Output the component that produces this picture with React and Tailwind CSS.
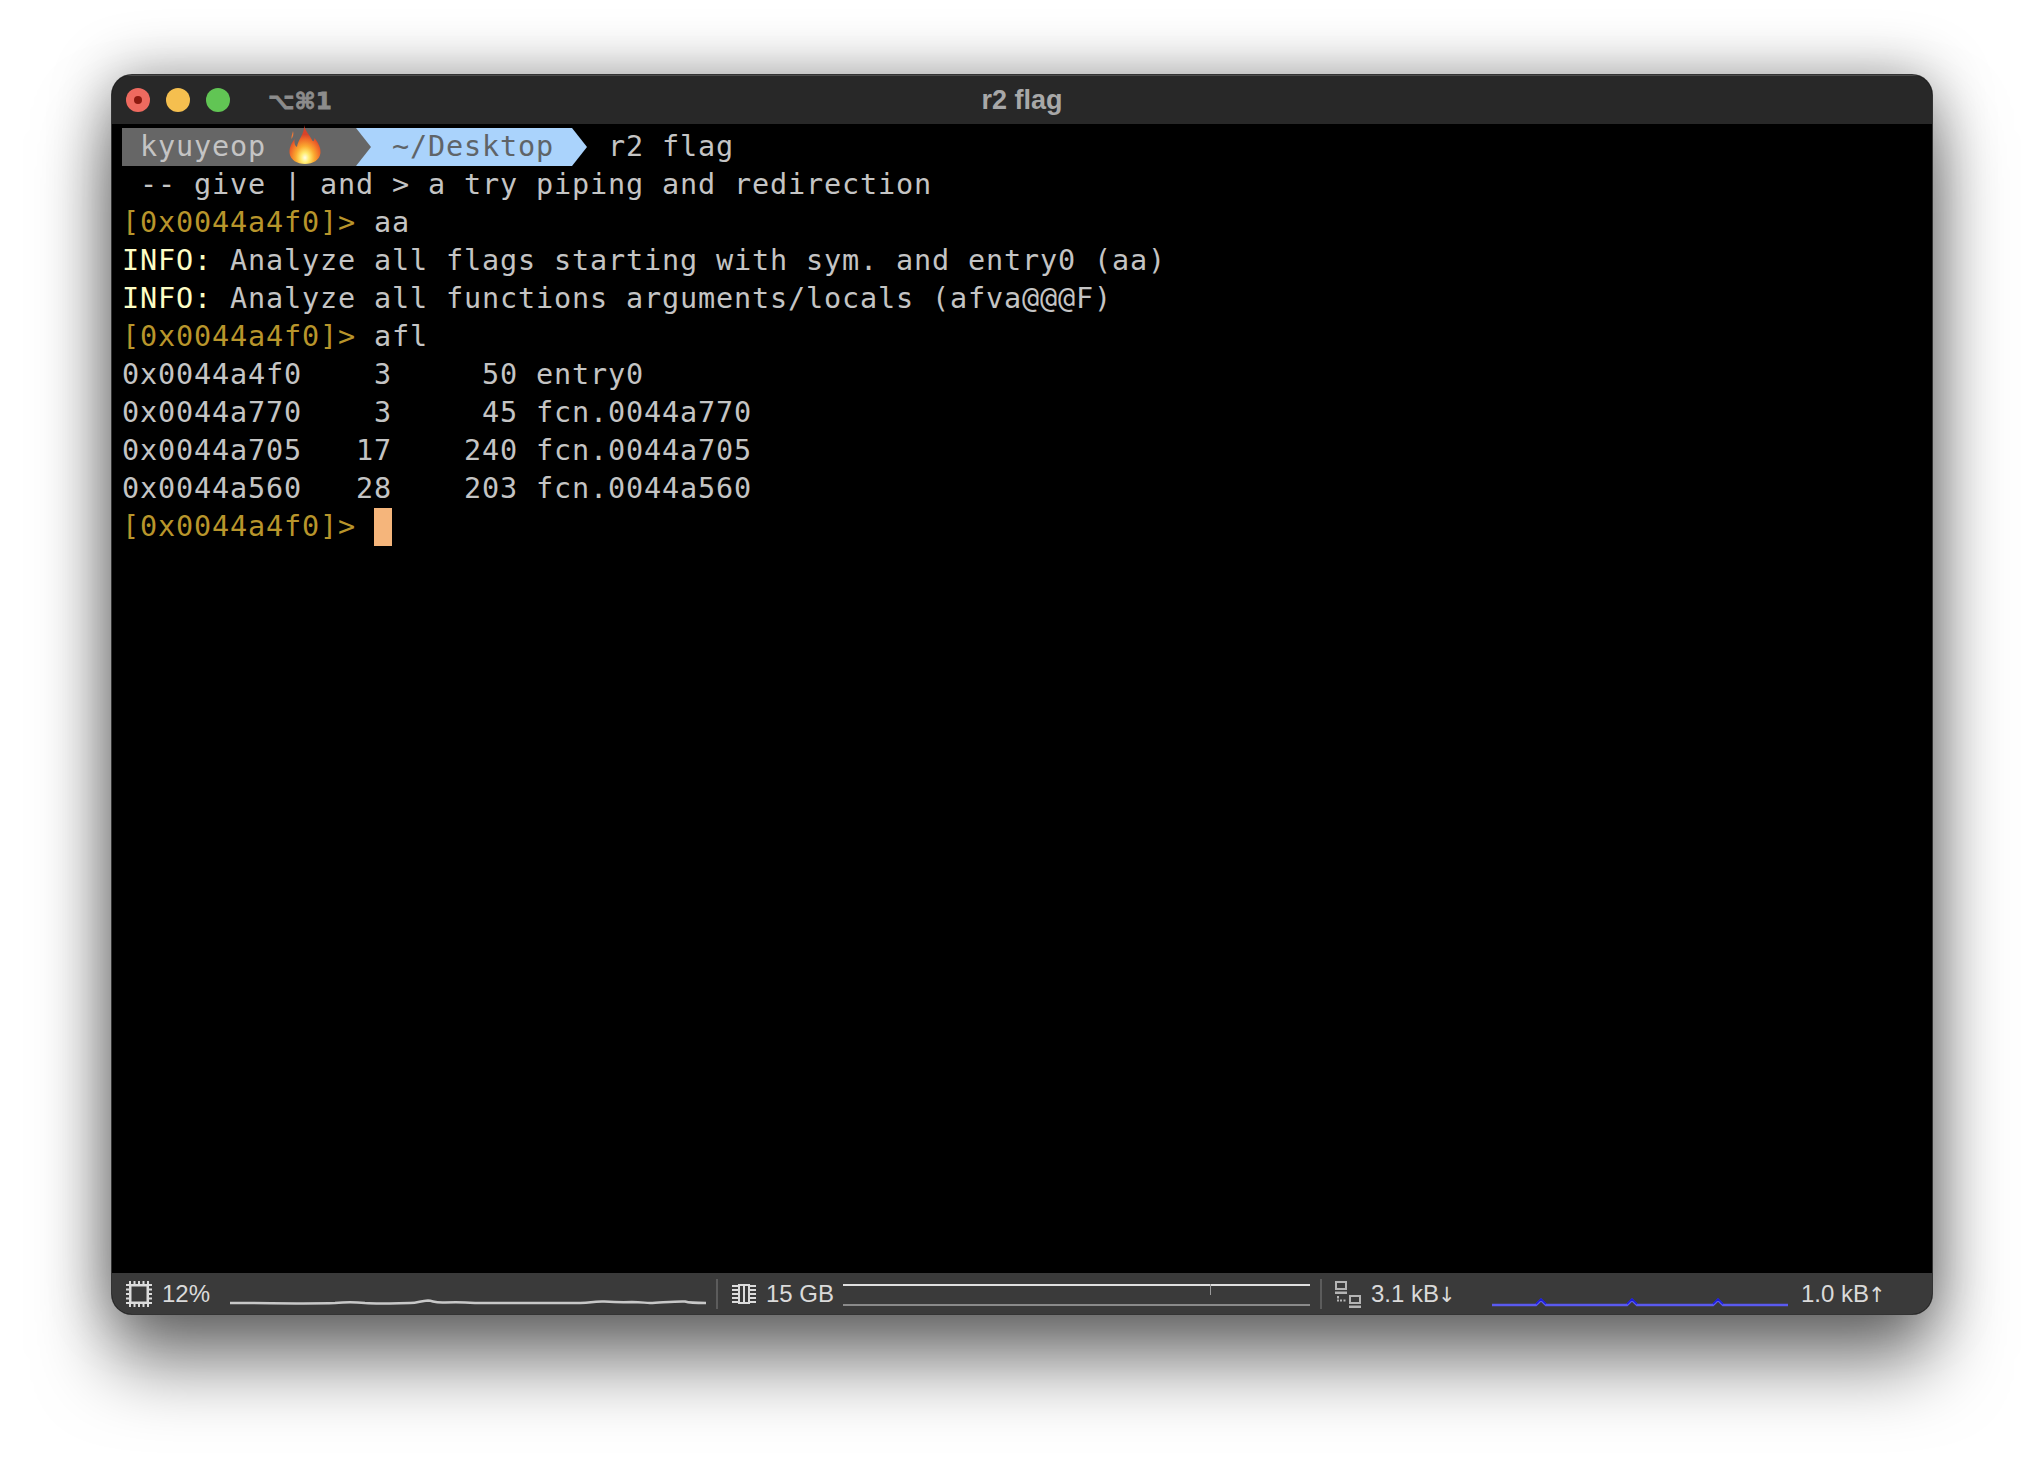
const mono = "font-['DejaVu_Sans_Mono',monospace]";

function Row({ children }) {
  return <div className="h-[38px] leading-[38px] whitespace-pre">{children}</div>;
}

function Flame() {
  return (
    <svg viewBox="0 0 32 40" className="absolute left-[167px] top-[-3px] w-[32px] h-[40px]">
      <defs>
        <radialGradient id="fl" cx="50%" cy="84%" r="60%">
          <stop offset="0" stopColor="#fffde8" />
          <stop offset="0.22" stopColor="#ffec70" />
          <stop offset="0.5" stopColor="#fbaa30" />
          <stop offset="0.8" stopColor="#ef6a28" />
          <stop offset="1" stopColor="#d9432a" />
        </radialGradient>
      </defs>
      <path d="M15 0C15.500 5 20 9 23 15C24 17 25 17 25.500 13C29 18 32 22 31.500 28C30.500 35 24 39 16 39C8 39 1.500 35 .5 28C0 22 3 18 5.500 14C5 18 6 21 8 22C8.500 15 16 9 15 0Z" fill="url(#fl)" />
      <path d="M4 6C3.500 9 2 11 2.500 14C4 12 5 9 4 6Z" fill="#ee7a38" />
    </svg>
  );
}

function Segments() {
  return (
    <div className="relative flex h-[38px] leading-[38px] whitespace-pre">
      <div className="w-[234px] bg-[#666666] text-[#c4c4c4]"> kyuyeop</div>
      <Flame />
      <div className="relative w-[216px] bg-[#aad3fc] text-[#5f6468]">
        <svg viewBox="0 0 18 38" className="absolute left-0 top-0 w-[18px] h-[38px]">
          <path d="M0 0L15 19L0 38Z" fill="#666666" />
        </svg>
        <span className="ml-[36px]">~/Desktop</span>
      </div>
      <svg viewBox="0 0 18 38" className="w-[18px] h-[38px] shrink-0">
        <path d="M0 0L15 19L0 38Z" fill="#aad3fc" />
      </svg>
      <span className="ml-[18px]">r2 flag</span>
    </div>
  );
}

function Prompt({ children }) {
  return (
    <Row>
      <span className="text-[#b8952b]">[0x0044a4f0]&gt;</span> {children}
    </Row>
  );
}

function Info({ children }) {
  return (
    <Row>
      <span className="text-[#fdfdc4]">INFO:</span> {children}
    </Row>
  );
}

function CpuIcon() {
  const t = [2.5, 7, 11.5, 16, 20.5];
  return (
    <svg viewBox="0 0 26 26" className="w-[26px] h-[26px] shrink-0" fill="#dcdcdc">
      <path fillRule="evenodd" d="M3 3h20v20H3zM5.500 5.500v15h15v-15z" />
      {t.map((v) => (
        <g key={v}>
          <rect x={v + 0.5} y="0" width="2" height="3" />
          <rect x={v + 0.5} y="23" width="2" height="3" />
          <rect x="0" y={v + 0.5} width="3" height="2" />
          <rect x="23" y={v + 0.5} width="3" height="2" />
        </g>
      ))}
    </svg>
  );
}

function MemIcon() {
  return (
    <svg viewBox="0 0 24 20" className="w-[24px] h-[20px] shrink-0" fill="#dcdcdc">
      <path fillRule="evenodd" d="M6 0h12v20H6zM8 2v16h8V2z" />
      <rect x="11" y="2" width="2" height="16" />
      {[1, 5, 9, 13, 17].map((y) => (
        <g key={y}>
          <rect x="0" y={y} width="6" height="2" />
          <rect x="18" y={y} width="6" height="2" />
        </g>
      ))}
    </svg>
  );
}

function NetIcon() {
  return (
    <svg viewBox="0 0 27 28" className="w-[27px] h-[28px] shrink-0" fill="#b4b4b4">
      <path fillRule="evenodd" d="M1 1h12v9H1zM3 3v5h8V3z" />
      <rect x="1" y="11.500" width="12" height="2.500" />
      <path fillRule="evenodd" d="M15 15h12v9H15zM17 17v5h8v-5z" />
      <rect x="15" y="25.500" width="12" height="2.500" />
      <rect x="3" y="16" width="2" height="2.500" />
      <rect x="3" y="19.500" width="2" height="2" />
      <rect x="6" y="19.500" width="2" height="2" />
      <rect x="9.500" y="19.500" width="2" height="2" />
    </svg>
  );
}

function Sep() {
  return <div className="w-[2px] h-[30px] bg-[#5c5c5c] shrink-0" />;
}

function StatText({ className, children }) {
  return (
    <span className={`font-['Liberation_Sans',sans-serif] text-[24px] leading-none text-[#dadada] whitespace-pre shrink-0 ${className}`}>
      {children}
    </span>
  );
}

function Arrow({ children }) {
  return <span className="font-['DejaVu_Sans',sans-serif] text-[21px] ml-[-1px]">{children}</span>;
}

export default function App() {
  return (
    <div className="w-[2044px] h-[1462px] bg-white pl-[112px] pt-[75px] overflow-hidden">
      <div className="w-[1820px] h-[1239px] rounded-[20px] overflow-hidden flex flex-col bg-black ring-1 ring-[#333333] shadow-[0_50px_75px_rgba(0,0,0,0.5),0_0_60px_rgba(0,0,0,0.38)]">
        <div className="relative h-[49px] bg-[#282828] border-t border-[#4c4c4c] flex items-center pl-[14px] shrink-0">
          <div className="w-[24px] h-[24px] rounded-full bg-[#ee6a5f] flex items-center justify-center">
            <div className="w-[8px] h-[8px] rounded-full bg-[#8c1a10]" />
          </div>
          <div className="w-[24px] h-[24px] rounded-full bg-[#f5bf4f] ml-[16px]" />
          <div className="w-[24px] h-[24px] rounded-full bg-[#61c554] ml-[16px]" />
          <span className="ml-[38px] mt-[2px] font-['DejaVu_Sans',sans-serif] font-bold text-[23px] text-[#8c8c8c] [-webkit-text-stroke:0.8px_#8c8c8c] whitespace-pre">⌥⌘1</span>
          <span className="absolute left-0 right-0 text-center font-['Liberation_Sans',sans-serif] font-bold text-[27px] text-[#a8a8a8]">r2 flag</span>
        </div>

        <div className={`flex-1 bg-black pl-[10px] pt-[4px] ${mono} text-[28.5px] tracking-[0.84px] text-[#c4c4c4]`}>
          <Segments />
          <Row> -- give | and &gt; a try piping and redirection</Row>
          <Prompt>aa</Prompt>
          <Info>Analyze all flags starting with sym. and entry0 (aa)</Info>
          <Info>Analyze all functions arguments/locals (afva@@@F)</Info>
          <Prompt>afl</Prompt>
          <Row>0x0044a4f0    3     50 entry0</Row>
          <Row>0x0044a770    3     45 fcn.0044a770</Row>
          <Row>0x0044a705   17    240 fcn.0044a705</Row>
          <Row>0x0044a560   28    203 fcn.0044a560</Row>
          <Row>
            <span className="text-[#b8952b]">[0x0044a4f0]&gt;</span>{" "}
            <span className="inline-block w-[18px] h-[38px] align-top bg-[#f5b57b]" />
          </Row>
        </div>

        <div className="h-[41px] bg-[#3a3a3a] flex items-center pl-[14px] shrink-0">
          <CpuIcon />
          <StatText className="ml-[10px] w-[47px]">12%</StatText>
          <svg viewBox="0 0 476 14" className="ml-[21px] w-[476px] h-[14px] mt-[14px] shrink-0" fill="none">
            <path d="M0 9C40 9 80 10 105 9C115 8 125 8 135 9C150 10 170 9 180 9C188 9 190 7 198 6.500C204 7 204 9 215 8.500C225 8 232 8 245 9C280 9 320 9 350 9C362 9 360 7.500 372 7.500C382 8 390 8.500 402 8C412 8 415 9 420 9C432 8.500 448 7 455 7.500C460 9 465 9 476 9" stroke="#c8c8c8" strokeWidth="2.500" />
          </svg>
          <div className="ml-[10px]"><Sep /></div>
          <div className="ml-[14px]"><MemIcon /></div>
          <StatText className="ml-[10px] w-[66px]">15 GB</StatText>
          <div className="ml-[11px] w-[467px] h-[22px] mt-[2px] flex flex-col justify-between shrink-0 relative">
            <div className="h-[2px] bg-[#e0e0e0]" />
            <div className="absolute left-[367px] top-0 w-px h-[11px] bg-[#9a9a9a]" />
            <div className="h-[2px] bg-[#8a8a8a]" />
          </div>
          <div className="ml-[10px]"><Sep /></div>
          <div className="ml-[12px]"><NetIcon /></div>
          <StatText className="ml-[10px] w-[83px]">3.1 kB<Arrow>↓</Arrow></StatText>
          <svg viewBox="0 0 296 14" className="ml-[38px] w-[296px] h-[14px] mt-[12px] shrink-0" fill="none">
            <path d="M0 12H44L49 7L54 12H135L140 7L145 12H221L226 7L231 12H296" stroke="#5a5af0" strokeWidth="2.500" />
            <path d="M44 11L49 6L54 11M135 11L140 6L145 11M221 11L226 6L231 11" stroke="#1a1ae0" strokeWidth="1.500" />
          </svg>
          <StatText className="ml-[13px]">1.0 kB<Arrow>↑</Arrow></StatText>
        </div>
      </div>
    </div>
  );
}
